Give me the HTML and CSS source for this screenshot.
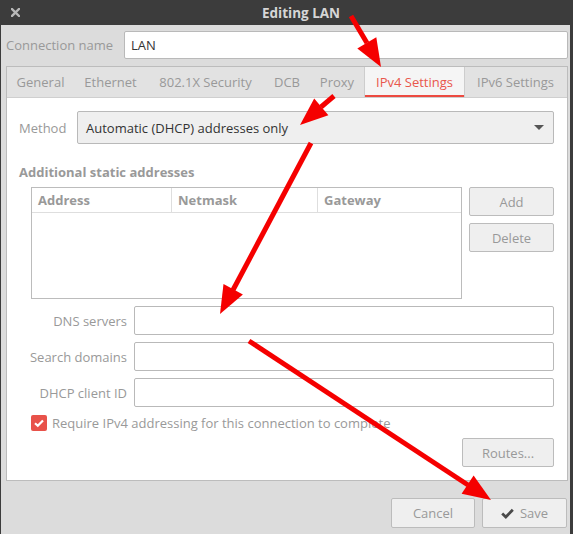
FILE: index.html
```html
<!DOCTYPE html>
<html>
<head>
<meta charset="utf-8">
<link rel="stylesheet" href="styles.css">
</head>
<body>
<div class="window">
  <header class="titlebar">
    <span class="close">
      <svg width="9" height="9" viewBox="0 0 9 9"><path d="M1 1 L8 8 M8 1 L1 8" stroke="#b8b8b8" stroke-width="2.4" stroke-linecap="square"/></svg>
    </span>
    <span class="title">Editing LAN</span>
  </header>
  <main class="content">
    <div class="name-row">
      <span class="label">Connection name</span>
      <div class="entry name-entry">LAN</div>
    </div>
    <div class="notebook">
      <div class="tabs">
        <span class="tab t-general">General</span>
        <span class="tab t-ethernet">Ethernet</span>
        <span class="tab t-security">802.1X Security</span>
        <span class="tab t-dcb">DCB</span>
        <span class="tab t-proxy">Proxy</span>
        <span class="tab t-ipv4 active">IPv4 Settings</span>
        <span class="tab t-ipv6">IPv6 Settings</span>
      </div>
      <div class="page">
        <div class="method-row">
          <span class="label">Method</span>
          <div class="combo">
            <span>Automatic (DHCP) addresses only</span>
            <span class="caret"></span>
          </div>
        </div>
        <div class="section-title">Additional static addresses</div>
        <div class="addresses">
          <div class="table">
            <div class="thead">
              <span class="th c1">Address</span>
              <span class="th c2">Netmask</span>
              <span class="th c3">Gateway</span>
            </div>
          </div>
          <div class="side-buttons">
            <div class="btn">Add</div>
            <div class="btn">Delete</div>
          </div>
        </div>
        <div class="form">
          <span class="flabel">DNS servers</span><div class="entry"></div>
          <span class="flabel">Search domains</span><div class="entry"></div>
          <span class="flabel">DHCP client ID</span><div class="entry"></div>
        </div>
        <div class="check-row">
          <span class="checkbox">
            <svg width="16" height="16" viewBox="0 0 16 16"><path d="M4 8.2 L6.8 10.8 L12 5.4" fill="none" stroke="#fff" stroke-width="2.2"/></svg>
          </span>
          <span class="check-label">Require IPv4 addressing for this connection to complete</span>
        </div>
        <div class="routes-row">
          <div class="btn routes">Routes...</div>
        </div>
      </div>
    </div>
    <div class="actions">
      <div class="btn action">Cancel</div>
      <div class="btn action save">
        <svg width="13" height="11" viewBox="0 0 13 11"><path d="M1.2 5.6 L4.8 9 L11.8 1.8" fill="none" stroke="#4a4a4a" stroke-width="2.8"/></svg>
        <span>Save</span>
      </div>
    </div>
  </main>
</div>
<svg class="arrows" width="573" height="534" viewBox="0 0 573 534">
  <g fill="#f50000" stroke="#f50000">
    <line x1="351" y1="16" x2="367" y2="43" stroke-width="5"/>
    <polygon points="381,67 357.3,48.5 376.3,37.3" stroke="none"/>
    <line x1="334" y1="96" x2="321" y2="107" stroke-width="5"/>
    <polygon points="300,125 314.2,98.4 328.4,115.2" stroke="none"/>
    <line x1="311" y1="143" x2="233" y2="290" stroke-width="5"/>
    <polygon points="220,314 223.5,284.1 242.9,294.5" stroke="none"/>
    <line x1="249" y1="341" x2="468" y2="485" stroke-width="5"/>
    <polygon points="491,500 461.6,493.8 473.6,475.4" stroke="none"/>
  </g>
</svg>
</body>
</html>
```
FILE: styles.css
```css
* { box-sizing: border-box; }
html, body { margin: 0; padding: 0; }
body {
  width: 573px;
  height: 534px;
  overflow: hidden;
  position: relative;
  background: #3c3c3c;
  font-family: "Open Sans", "Noto Sans", sans-serif;
  font-size: 13px;
  color: #999;
}
.window {
  width: 573px;
  height: 534px;
  display: flex;
  flex-direction: column;
  border-left: 1px solid #3c3c3c;
  border-right: 3px solid #3c3c3c;
}
.titlebar {
  height: 25px;
  flex: none;
  display: flex;
  align-items: center;
  background: #3c3c3c;
}
.close {
  width: 31px;
  display: flex;
  justify-content: center;
  padding-right: 2px;
}
.close svg { display: block; }
.title {
  flex: 1;
  text-align: center;
  color: #d6d6d6;
  font-weight: bold;
  font-size: 13.5px;
}
.content {
  flex: 1;
  background: #dcdcdc;
  padding: 6px 2px 0 5px;
  display: flex;
  flex-direction: column;
}
.name-row {
  display: flex;
  align-items: center;
  height: 28px;
}
.name-row .label { width: 118px; color: #999; white-space: nowrap; }
.entry {
  background: #fff;
  border: 1px solid #b9b9b9;
  border-radius: 2px;
  height: 29px;
}
.name-entry {
  flex: 1;
  height: 28px;
  color: #333;
  display: flex;
  align-items: center;
  padding-left: 6px;
}
.notebook {
  margin-top: 7px;
  border: 1px solid #bcbcbc;
  display: flex;
  flex-direction: column;
}
.tabs {
  height: 31px;
  display: flex;
  background: #e2e2e2;
  border-bottom: 1px solid #cfcfcf;
  overflow: hidden;
}
.tab {
  flex: none;
  white-space: nowrap;
  display: flex;
  align-items: center;
  justify-content: center;
  color: #999;
  border-left: 1px solid transparent;
  border-right: 1px solid transparent;
}
.t-general { width: 67px; }
.t-ethernet { width: 73px; }
.t-security { width: 117px; }
.t-dcb { width: 46px; }
.t-proxy { width: 54px; }
.t-ipv4 { width: 101px; }
.t-ipv6 { width: 101px; }
.tab.active {
  background: #f5f5f5;
  color: #e9574c;
  border-left-color: #cdcdcd;
  border-right-color: #cdcdcd;
  box-shadow: inset 0 -2px 0 #ec4a40;
}
.page {
  background: #fff;
  padding: 13px 13px 13px 12px;
  display: flex;
  flex-direction: column;
}
.method-row {
  display: flex;
  align-items: center;
  height: 33px;
}
.method-row .label { width: 58px; }
.combo {
  flex: 1;
  height: 33px;
  background: #efefef;
  border: 1px solid #b9b9b9;
  border-radius: 2px;
  display: flex;
  align-items: center;
  justify-content: space-between;
  padding: 0 9px 0 8px;
  color: #333;
}
.caret {
  width: 0; height: 0;
  border-left: 5px solid transparent;
  border-right: 5px solid transparent;
  border-top: 5px solid #555;
}
.section-title {
  margin-top: 19px;
  height: 18px;
  line-height: 18px;
  font-weight: bold;
  color: #999;
}
.addresses {
  margin-top: 6px;
  margin-left: 12px;
  display: flex;
  gap: 7px;
}
.table {
  width: 431px;
  height: 112px;
  border: 1px solid #bcbcbc;
}
.thead {
  height: 25px;
  display: flex;
  border-bottom: 1px solid #dedede;
}
.th {
  font-weight: bold;
  color: #999;
  padding-left: 6px;
  display: flex;
  align-items: center;
}
.c1 { width: 140px; border-right: 1px solid #dedede; }
.c2 { width: 146px; border-right: 1px solid #dedede; }
.c3 { flex: 1; }
.side-buttons {
  flex: 1;
  display: flex;
  flex-direction: column;
  gap: 7px;
}
.btn {
  height: 29px;
  background: #efefef;
  border: 1px solid #bcbcbc;
  border-radius: 2px;
  display: flex;
  align-items: center;
  justify-content: center;
  color: #999;
}
.form {
  margin-top: 7px;
  display: grid;
  grid-template-columns: 108px 1fr;
  column-gap: 7px;
  row-gap: 7px;
}
.flabel {
  text-align: right;
  align-self: center;
  color: #999;
  white-space: nowrap;
}
.check-row {
  margin-top: 8px;
  margin-left: 12px;
  height: 16px;
  display: flex;
  align-items: center;
  gap: 5px;
}
.checkbox {
  width: 16px; height: 16px;
  background: #e8524a;
  border-radius: 2px;
  display: block;
}
.checkbox svg { display: block; }
.check-label { color: #999; }
.routes-row {
  margin-top: 7px;
  display: flex;
  justify-content: flex-end;
}
.routes { width: 92px; }
.actions {
  margin-top: 17px;
  display: flex;
  justify-content: flex-end;
  gap: 7px;
  padding-right: 1px;
}
.action { width: 84px; height: 30px; }
.save { width: 85px; gap: 6px; color: #999; }
.save svg { display: block; }
.arrows {
  position: absolute;
  left: 0; top: 0;
  pointer-events: none;
}
```
